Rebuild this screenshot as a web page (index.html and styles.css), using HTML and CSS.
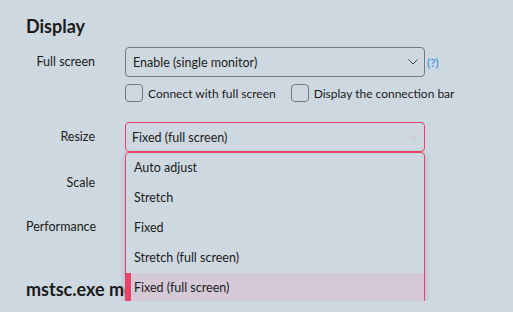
FILE: index.html
```html
<!DOCTYPE html>
<html lang="en">
<head>
    <meta charset="UTF-8">
    <meta name="viewport" content="width=device-width, initial-scale=1.0">
    <title>Display settings</title>
    <link rel="stylesheet" href="styles.css">
</head>
<body>

    <div class="page">
        <h2 class="section-title">Display</h2>

        <div class="form">
            <label class="field-label row-full">Full screen</label>
            <div class="field row-full">
                <div class="select">
                    <span>Enable (single monitor)</span>
                    <svg class="chevron" width="10" height="6" viewBox="0 0 10 6"><path d="M0.5 0.5 L5 5 L9.5 0.5" fill="none" stroke="#3b4350" stroke-width="1"/></svg>
                </div>
                <a class="help">(?)</a>
            </div>

            <div class="field checks">
                <label class="check"><span class="box"></span>Connect with full screen</label>
                <label class="check"><span class="box"></span>Display the connection bar</label>
            </div>

            <label class="field-label row-resize">Resize</label>
            <div class="field row-resize">
                <div class="select-wrap">
                    <div class="select open">
                        <span>Fixed (full screen)</span>
                        <svg class="chevron" width="10" height="6" viewBox="0 0 10 6"><path d="M0.5 0.5 L5 5 L9.5 0.5" fill="none" stroke="#d8b8c4" stroke-width="1"/></svg>
                    </div>
                    <ul class="menu">
                        <li>Auto adjust</li>
                        <li>Stretch</li>
                        <li>Fixed</li>
                        <li>Stretch (full screen)</li>
                        <li class="selected">Fixed (full screen)</li>
                    </ul>
                </div>
            </div>

            <label class="field-label row-plain">Scale</label>
            <div class="field row-plain"></div>

            <label class="field-label row-plain">Performance</label>
            <div class="field row-plain"></div>
        </div>

        <h2 class="section-title second">mstsc.exe mode</h2>
    </div>

</body>
</html>
```

FILE: styles.css
```css
body {
    font-family: "Segoe UI", Lato, sans-serif;
    margin: 0;
    padding: 0;
    background-color: #ced8e0;
    color: #1b1b1b;
    font-size: 12.5px;
}
.page {
    padding: 14px 26px 0 26px;
}
.section-title {
    font-size: 18px;
    font-weight: bold;
    margin: 0;
    line-height: 24px;
}
.section-title.second {
    margin-top: 35px;
}
.form {
    display: grid;
    grid-template-columns: 69px auto;
    column-gap: 30px;
    margin-top: 9px;
}
.field-label {
    grid-column: 1;
    text-align: right;
    height: 30px;
    line-height: 30px;
    white-space: nowrap;
}
.field {
    grid-column: 2;
    display: flex;
    align-items: center;
    height: 30px;
}
.row-resize {
    margin-top: 20px;
}
.row-plain {
    margin-top: 16px;
}
.row-plain + .row-plain {
    margin-top: 14px;
}
.select {
    box-sizing: border-box;
    width: 300px;
    height: 30px;
    border: 1px solid #6f7a88;
    border-radius: 4px;
    display: flex;
    align-items: center;
    justify-content: space-between;
    padding: 0 4px 0 7px;
}
.chevron {
    margin-right: 2px;
}
.help {
    color: #2f86e0;
    font-size: 12px;
    margin-left: 2px;
    margin-top: 1px;
}
.checks {
    height: 18px;
    margin-top: 7px;
    gap: 15px;
    white-space: nowrap;
    font-size: 12px;
}
.check {
    display: flex;
    align-items: center;
    gap: 5px;
}
.box {
    box-sizing: border-box;
    width: 18px;
    height: 18px;
    border: 1px solid #6f7a88;
    border-radius: 4px;
}
.select-wrap {
    position: relative;
}
.select.open {
    border: 1.5px solid #e8426a;
    padding-left: 6px;
}
.menu {
    position: absolute;
    top: 30px;
    left: 0;
    box-sizing: border-box;
    width: 300px;
    margin: 0;
    padding: 0;
    list-style: none;
    background-color: #ced8e0;
    border: 1px solid #e8426a;
    border-radius: 4px;
    box-shadow: 0 2px 6px rgba(0, 0, 0, 0.18);
    overflow: hidden;
    z-index: 2;
}
.menu li {
    height: 30px;
    line-height: 30px;
    padding-left: 8px;
}
.menu li.selected {
    background-color: #d5c9d7;
    box-shadow: inset 5px 0 0 #e8426a;
}
```
